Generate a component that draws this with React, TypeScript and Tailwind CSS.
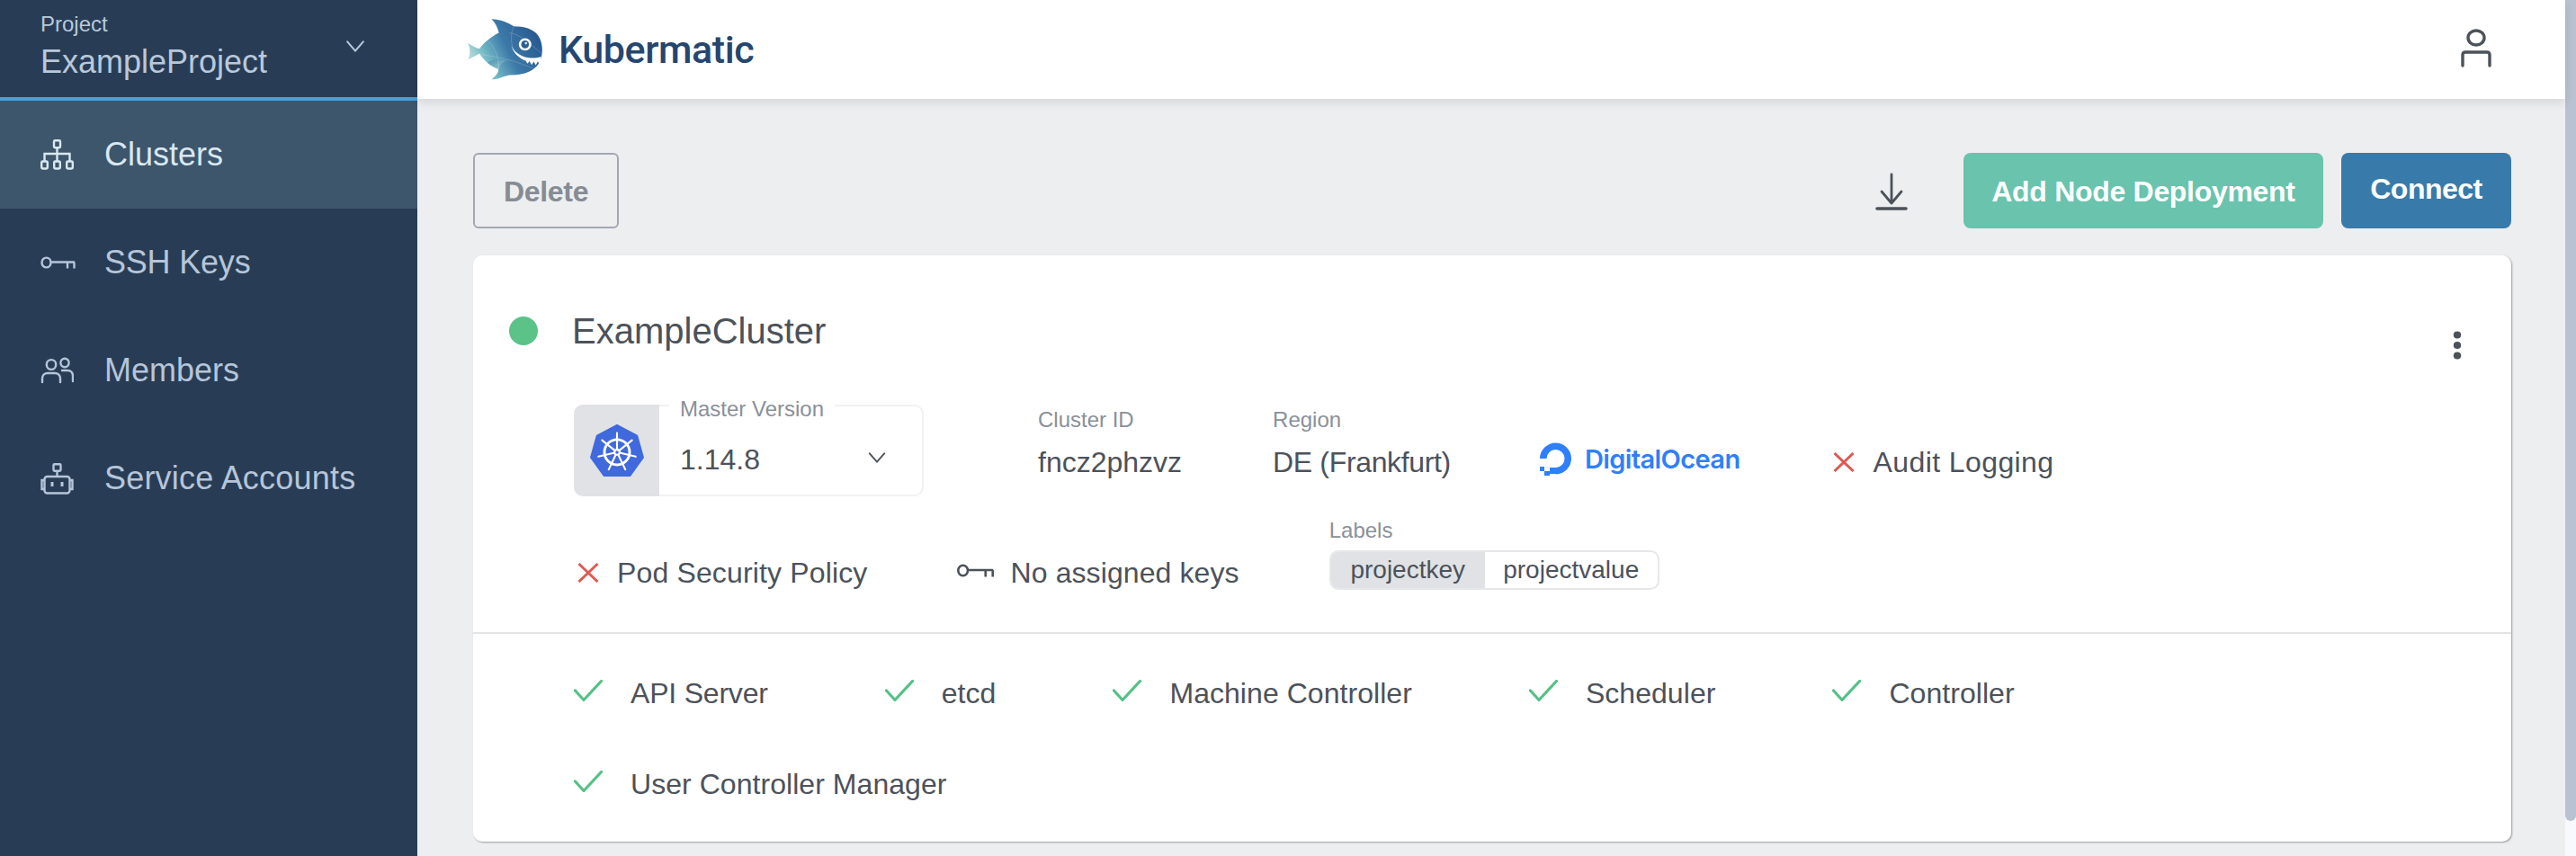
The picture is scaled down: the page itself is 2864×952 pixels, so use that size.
import React from "react";

const Tree = () => (
  <svg width="37" height="34" viewBox="0 0 37 34" fill="none" stroke="currentColor" strokeWidth="2.4">
    <rect x="15" y="1.2" width="7" height="8" rx="1.2" />
    <path d="M18.5 9v7M4.5 24v-8h28v8M18.5 16v8" />
    <rect x="1.2" y="24.5" width="6.6" height="8" rx="1.2" />
    <rect x="15.2" y="24.5" width="6.6" height="8" rx="1.2" />
    <rect x="29.2" y="24.5" width="6.6" height="8" rx="1.2" />
  </svg>
);
const Key = ({ w = 39, h = 15 }: { w?: number; h?: number }) => (
  <svg width={w} height={h} viewBox="0 0 39 15" fill="none" stroke="currentColor" strokeWidth="2.4">
    <ellipse cx="6.5" cy="7" rx="5" ry="5.4" />
    <path d="M11.5 6.5H38M30 6.5v7M37.5 6.5v7" />
  </svg>
);
const People = () => (
  <svg width="37" height="30" viewBox="0 0 37 30" fill="none" stroke="currentColor" strokeWidth="2.4" strokeLinecap="round">
    <ellipse cx="12" cy="8.5" rx="5.2" ry="5.4" />
    <ellipse cx="27" cy="6.5" rx="4.6" ry="4.8" />
    <path d="M2 28v-4c0-3.500 2.500-6 6-6h8c3.500 0 6 2.500 6 6v4M24 15h6c3.500 0 6 2.500 6 6v6" />
  </svg>
);
const Robot = () => (
  <svg width="37" height="35" viewBox="0 0 37 35" fill="none" stroke="currentColor" strokeWidth="2.4">
    <rect x="14.500" y="1.200" width="8" height="7.500" rx="1.200" />
    <path d="M18.500 9v6" />
    <rect x="4.500" y="15" width="28" height="18.500" rx="3" />
    <path d="M4.500 19H1.500v10h3M32.500 19h3v10h-3" />
    <rect x="11.500" y="21" width="3" height="5" fill="currentColor" stroke="none" />
    <rect x="22.500" y="21" width="3" height="5" fill="currentColor" stroke="none" />
  </svg>
);
const Chevron = ({ className = "" }: { className?: string }) => (
  <svg className={className} viewBox="0 0 22 14" fill="none" stroke="currentColor" strokeWidth="2.200" strokeLinecap="round" strokeLinejoin="round">
    <path d="M1.500 1.500 11 12.500 20.500 1.500" />
  </svg>
);
const Cross = () => (
  <svg width="24" height="22" viewBox="0 0 24 22" fill="none" stroke="#dc5b55" strokeWidth="3">
    <path d="M1.500 1 22.500 21M22.500 1 1.500 21" />
  </svg>
);
const Check = () => (
  <svg width="32" height="24" viewBox="0 0 32 24" fill="none" stroke="#55c186" strokeWidth="3.200" strokeLinecap="round" strokeLinejoin="round">
    <path d="M1.500 12 11 22.500 30.500 1.500" />
  </svg>
);

const Shark = () => (
  <svg width="86" height="70" viewBox="80 46 258 212">
    <defs>
      <linearGradient id="sk" x1="0" y1="0.75" x2="1" y2="0.35">
        <stop offset="0" stopColor="#c5e8df" />
        <stop offset="0.28" stopColor="#6fb5c4" />
        <stop offset="0.55" stopColor="#3c79a8" />
        <stop offset="1" stopColor="#27588f" />
      </linearGradient>
      <linearGradient id="sk2" x1="0" y1="0" x2="1" y2="1">
        <stop offset="0" stopColor="#3f7dab" />
        <stop offset="1" stopColor="#b5e2d8" />
      </linearGradient>
    </defs>
    <path
      d="M165 50C195 50 220 62 240 74C275 74 305 82 322 105C338 128 340 165 328 192C312 226 270 240 225 238C210 240 190 252 165 253C180 240 190 228 188 218C165 212 140 190 124 166C112 172 98 182 86 186C94 168 94 148 85 130C98 138 110 146 124 150C140 128 165 108 190 96C186 80 178 62 165 50Z"
      fill="url(#sk)"
    />
    <path d="M150 196C160 205 175 213 188 218C195 200 205 192 215 190C190 182 170 186 150 196Z" fill="url(#sk2)" opacity="0.7" />
    <path d="M145 118C170 135 190 170 190 218M122 168C170 175 240 185 318 222M240 74C230 95 228 130 240 150M225 96C260 100 290 130 333 165" fill="none" stroke="#ffffff" strokeOpacity="0.28" strokeWidth="2" />
    <path d="M231 139C246 170 285 190 332 176L328 205L321 192L314 205L307 193L300 204L293 191L286 200L280 190C258 182 240 165 231 139Z" fill="#ffffff" />
    <circle cx="278" cy="135" r="21" fill="#ffffff" />
    <circle cx="278" cy="135" r="13" fill="#2c5f91" />
    <circle cx="281" cy="131" r="4" fill="#dceef2" />
  </svg>
);

const K8s = () => {
  const spokes = Array.from({ length: 7 }, (_, i) => {
    const a = ((-90 + (i * 360) / 7) * Math.PI) / 180;
    return { x1: 30 + 3 * Math.cos(a), y1: 31 + 3 * Math.sin(a), x2: 30 + 22 * Math.cos(a), y2: 31 + 22 * Math.sin(a) };
  });
  return (
    <svg width="60" height="58" viewBox="-1 -1 62 60">
      <path d="M30 0 53 12 60 37 45 58H15L0 37 7 12Z" fill="#4069dd" stroke="#4069dd" strokeWidth="2" strokeLinejoin="round" />
      <circle cx="30" cy="31" r="14.500" fill="none" stroke="#ffffff" strokeWidth="3" />
      {spokes.map((s, i) => (
        <line key={i} {...s} stroke="#ffffff" strokeWidth="2.200" strokeLinecap="round" />
      ))}
      <circle cx="30" cy="31" r="4" fill="#ffffff" />
      <circle cx="30" cy="31" r="1.800" fill="#4069dd" />
    </svg>
  );
};

const DOLogo = () => (
  <div className="flex items-center gap-[13px] text-[#2f7ffb]">
    <svg width="39" height="38" viewBox="0 0 39 38" fill="none">
      <path d="M2 19A17.500 17.500 0 1 1 20 36.500V29A10 10 0 1 0 9.500 19Z" fill="currentColor" />
      <rect x="13" y="29" width="7" height="7" fill="currentColor" />
      <rect x="7" y="33" width="6" height="5" fill="currentColor" />
      <rect x="2" y="28" width="5" height="5" fill="currentColor" />
    </svg>
    <span className="font-['Inter',sans-serif] text-[29px] font-semibold leading-none tracking-[-0.6px]">DigitalOcean</span>
  </div>
);

const NavItem = ({ icon, label, active = false, track = "" }: { icon: React.ReactNode; label: string; active?: boolean; track?: string }) => (
  <div className={`flex h-[120px] items-center pl-[45px] text-[36px] ${active ? "bg-[#3d566c] text-[#d9e8f2]" : "text-[#b6c5d9]"}`}>
    <span className="flex w-[71px] shrink-0 items-center">{icon}</span>
    <span className={track}>{label}</span>
  </div>
);

const Health = ({ label, tight = false }: { label: string; tight?: boolean }) => (
  <div className="flex h-[48px] items-center">
    <span className="mb-[6px] mr-[31px] flex shrink-0">
      <Check />
    </span>
    <span className={tight ? "tracking-[-0.2px]" : "tracking-[0.05px]"}>{label}</span>
  </div>
);

const Field = ({ label, value, tight = false }: { label: string; value: string; tight?: boolean }) => (
  <div className="flex flex-col pt-[2px]">
    <span className="text-[24px] leading-[28px] text-[#8a9098]">{label}</span>
    <span className={`mt-[14px] text-[32px] leading-[38px] ${tight ? "tracking-[-0.35px]" : ""}`}>{value}</span>
  </div>
);

export default function App() {
  return (
    <div className="flex h-[952px] w-[2864px] overflow-hidden bg-[#edeef0] font-['Liberation_Sans',Arial,sans-serif] text-[#4c525a]">
      <aside className="flex w-[464px] shrink-0 flex-col bg-[#283d55]">
        <div className="relative h-[112px] border-b-[4px] border-[#4a9fd8] pl-[45px] text-[#b9c8db]">
          <div className="pt-[13px] text-[24px] leading-[28px]">Project</div>
          <div className="mt-[7px] text-[36px] leading-[42px]">ExampleProject</div>
          <Chevron className="absolute right-[58px] top-[45px] h-[13px] w-[22px]" />
        </div>
        <NavItem active icon={<Tree />} label="Clusters" />
        <NavItem icon={<Key />} label="SSH Keys" track="tracking-[-0.2px]" />
        <NavItem icon={<People />} label="Members" />
        <NavItem icon={<Robot />} label="Service Accounts" track="tracking-[0.2px]" />
      </aside>

      <div className="flex min-w-0 flex-1 flex-col">
        <header className="z-10 flex h-[110px] shrink-0 items-center justify-between bg-white pl-[54px] pr-[82px] shadow-[0_4px_10px_rgba(0,0,0,0.10)]">
          <div className="flex items-center gap-[17px]">
            <Shark />
            <span className="font-['Roboto',sans-serif] text-[43px] font-medium leading-none tracking-[-0.4px] text-[#25466f]">Kubermatic</span>
          </div>
          <svg width="34" height="44" viewBox="0 0 34 44" fill="none" stroke="#4c525a" strokeWidth="3.400" strokeLinecap="round" className="mb-[2px]">
            <ellipse cx="17" cy="10" rx="9" ry="8" />
            <path d="M2 41V29c0-2 1-3 3-3h24c2 0 3 1 3 3v12" />
          </svg>
        </header>

        <main className="flex flex-1 flex-col pl-[62px] pr-[60px] pt-[60px]">
          <div className="flex h-[84px] items-center justify-between">
            <button className="h-full w-[162px] rounded-[6px] border-[2px] border-[#a2a8b1] pt-[2px] text-[32px] font-bold tracking-[-0.3px] text-[#868c94]">Delete</button>
            <div className="flex h-full items-center">
              <svg width="36" height="42" viewBox="0 0 36 42" fill="none" stroke="#4c525a" strokeWidth="2.800" strokeLinecap="round" strokeLinejoin="round" className="mr-[62px] mt-[2px]">
                <path d="M18 2v32M7 21 18 34 29 21" />
                <path d="M2 40h32" strokeWidth="3.600" />
              </svg>
              <button className="h-full w-[400px] rounded-[8px] bg-[#69c3ad] pt-[2px] text-[32px] font-bold tracking-[-0.3px] text-white">Add Node Deployment</button>
              <button className="ml-[20px] h-full w-[189px] rounded-[8px] bg-[#387bab] pb-[4px] text-[32px] font-bold tracking-[-0.5px] text-white">Connect</button>
            </div>
          </div>

          <section className="mt-[30px] h-[652px] rounded-[10px] bg-white text-[32px] shadow-[1px_1px_2px_rgba(0,0,0,0.35)]">
            <div className="h-[421px] border-b-[2px] border-[#e3e4e6] pl-[40px] pr-[55px] pt-[60px]">
              <div className="flex h-[48px] items-center">
                <span className="h-[32px] w-[32px] rounded-full bg-[#5bc288]" />
                <span className="ml-[38px] text-[40px] leading-none">ExampleCluster</span>
                <svg width="10" height="32" viewBox="0 0 10 32" className="ml-auto mt-[32px]" fill="#4c525a">
                  <ellipse cx="5" cy="4.500" rx="4.200" ry="4" />
                  <ellipse cx="5" cy="16" rx="4.200" ry="4" />
                  <ellipse cx="5" cy="27.500" rx="4.200" ry="4" />
                </svg>
              </div>

              <div className="ml-[72px] mt-[58px] flex h-[102px] items-start">
                <div className="relative flex h-full w-[389px] shrink-0">
                  <div className="flex w-[95px] items-center justify-center rounded-l-[10px] bg-[#e0e2e5]">
                    <K8s />
                  </div>
                  <div className="flex-1 rounded-r-[10px] border-[2px] border-l-0 border-[#f1f2f3] pl-[23px] pt-[40px] text-[32px] leading-[38px]">1.14.8</div>
                  <span className="absolute left-[106px] top-[-9px] bg-white px-[12px] text-[24px] leading-[28px] text-[#8a9098]">Master Version</span>
                  <Chevron className="absolute right-[42px] top-[53px] h-[12px] w-[20px] text-[#4c525a]" />
                </div>
                <div className="ml-[127px] mt-[1px] flex items-start">
                  <Field label="Cluster ID" value="fncz2phzvz" />
                  <div className="ml-[101px]">
                    <Field tight label="Region" value="DE (Frankfurt)" />
                  </div>
                  <div className="ml-[97px] mt-[40px]">
                    <DOLogo />
                  </div>
                  <div className="ml-[103px] mt-[44px] flex h-[38px] items-center">
                    <span className="mr-[21px] flex">
                      <Cross />
                    </span>
                    <span className="tracking-[0.4px]">Audit Logging</span>
                  </div>
                </div>
              </div>

              <div className="ml-[72px] mt-[24px] flex items-start">
                <div className="mt-[42px] flex h-[38px] items-center">
                  <span className="ml-[4px] mr-[20px] flex">
                    <Cross />
                  </span>
                  <span className="tracking-[0.15px]">Pod Security Policy</span>
                </div>
                <div className="ml-[98px] mt-[42px] flex h-[38px] items-center">
                  <span className="mb-[4px] mr-[18px] flex text-[#4c525a]">
                    <Key w={43} h={16} />
                  </span>
                  <span className="tracking-[0.1px]">No assigned keys</span>
                </div>
                <div className="ml-[100px] flex flex-col">
                  <span className="text-[24px] leading-[28px] text-[#8a9098]">Labels</span>
                  <div className="mt-[8px] flex h-[44px] w-[367px] overflow-hidden rounded-[10px] border-[2px] border-[#e6e7e9] text-[28px]">
                    <span className="flex w-[171px] items-center justify-center bg-[#e0e2e5]">projectkey</span>
                    <span className="flex flex-1 items-center justify-center">projectvalue</span>
                  </div>
                </div>
              </div>
            </div>

            <div className="flex flex-wrap gap-x-[130px] gap-y-[53px] pl-[112px] pr-[40px] pt-[42px]">
              <Health tight label="API Server" />
              <Health label="etcd" />
              <Health label="Machine Controller" />
              <Health label="Scheduler" />
              <Health label="Controller" />
              <Health label="User Controller Manager" />
            </div>
          </section>
        </main>
      </div>
      <div className="w-[12px] shrink-0 bg-[#f8f9fd]">
        <div className="h-[913px] rounded-b-[6px] bg-[#b8c2d0]" />
      </div>
    </div>
  );
}
